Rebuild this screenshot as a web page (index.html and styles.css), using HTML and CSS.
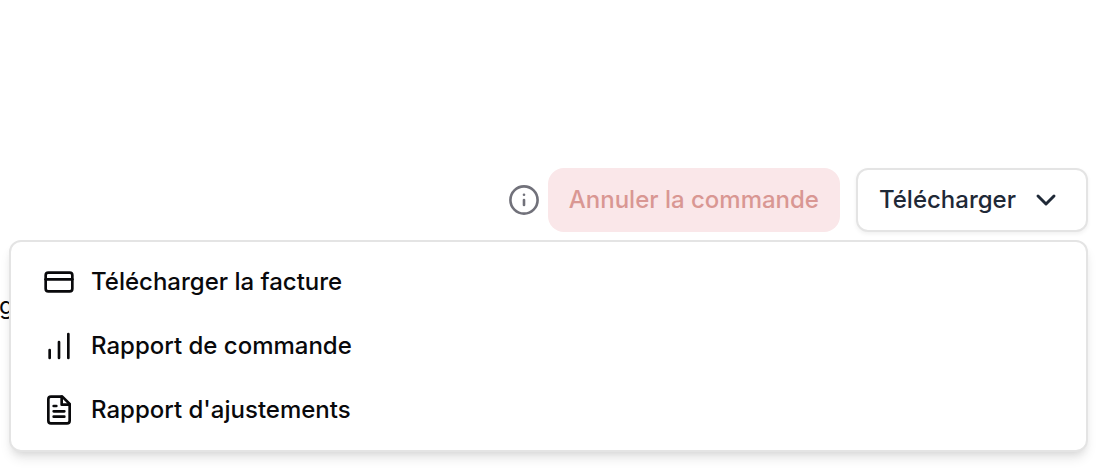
FILE: index.html
```html
<!DOCTYPE html>
<html lang="fr">
<head>
<meta charset="utf-8">
<meta name="viewport" content="width=device-width, initial-scale=1">
<title>Commande</title>
<link rel="stylesheet" href="styles.css">
</head>
<body>
<main class="page">
  <div class="toolbar">
    <svg class="icon icon-info" viewBox="0 0 32 32" aria-hidden="true">
      <circle cx="16" cy="16" r="13.6"/>
      <path d="M16 16v5"/>
      <path d="M16 10.8h.01"/>
    </svg>
    <button class="button button-danger" type="button" disabled>Annuler la commande</button>
    <button class="button button-outline" type="button" aria-haspopup="menu" aria-expanded="true">
      Télécharger
      <svg class="icon chevron" viewBox="0 0 24 24" aria-hidden="true"><path d="m6 9 6 6 6-6"/></svg>
    </button>
  </div>
  <span class="behind">g</span>
  <div class="menu" role="menu">
    <button class="menu-item" type="button" role="menuitem">
      <svg class="icon" viewBox="0 0 24 24" aria-hidden="true"><rect x="2" y="5" width="20" height="14" rx="2"/><path d="M2 10h20"/></svg>
      Télécharger la facture
    </button>
    <button class="menu-item" type="button" role="menuitem">
      <svg class="icon" viewBox="0 0 24 24" aria-hidden="true"><path d="M5 21v-6M12 21V9M19 21V3"/></svg>
      Rapport de commande
    </button>
    <button class="menu-item" type="button" role="menuitem">
      <svg class="icon" viewBox="0 0 24 24" aria-hidden="true"><path d="M14.5 2H6a2 2 0 0 0-2 2v16a2 2 0 0 0 2 2h12a2 2 0 0 0 2-2V7.5L14.5 2z"/><path d="M14 2v6h6M16 13H8M16 17H8M10 9H8"/></svg>
      Rapport d'ajustements
    </button>
  </div>
</main>
</body>
</html>
```
FILE: styles.css
```css
* {
  box-sizing: border-box;
}

body {
  margin: 0;
  background: #fff;
  color: #09090b;
  font-family: Inter, "Liberation Sans", sans-serif;
  font-size: 24px;
  line-height: 32px;
}

button {
  font: inherit;
  color: inherit;
}

.page {
  position: relative;
  padding: 168px 32px 20px 9px;
}

.toolbar {
  display: flex;
  align-items: center;
  justify-content: flex-end;
  margin-bottom: 8px;
}

.icon {
  flex: none;
  width: 32px;
  height: 32px;
  fill: none;
  stroke: currentColor;
  stroke-width: 2;
  stroke-linecap: round;
  stroke-linejoin: round;
}

.icon-info {
  margin-right: 8px;
  color: #71717a;
  stroke-width: 2.6;
}

.button {
  display: flex;
  align-items: center;
  height: 64px;
  padding: 0 21px;
  border: 0;
  border-radius: 16px;
  font-weight: 500;
}

.button-danger {
  margin-right: 16px;
  background: #fae7e9;
  color: #d99793;
}

.button-outline {
  gap: 14px;
  padding-right: 24px;
  border: 2px solid #e4e4e4;
  border-radius: 12px;
  background: #fff;
  color: #1f2937;
  box-shadow: 0 2px 4px rgba(0, 0, 0, 0.06);
}

.chevron {
  stroke-width: 2.2;
}

.behind {
  position: absolute;
  top: 290px;
  left: -1px;
}

.menu {
  position: relative;
  padding: 8px;
  border: 2px solid #e4e4e4;
  border-radius: 12px;
  background: #fff;
  box-shadow: 0 8px 12px -2px rgba(0, 0, 0, 0.1), 0 4px 8px -4px rgba(0, 0, 0, 0.1);
}

.menu-item {
  display: flex;
  align-items: center;
  gap: 16px;
  width: 100%;
  padding: 16px 24px;
  border: 0;
  background: transparent;
  font-weight: 500;
  text-align: left;
}
```
